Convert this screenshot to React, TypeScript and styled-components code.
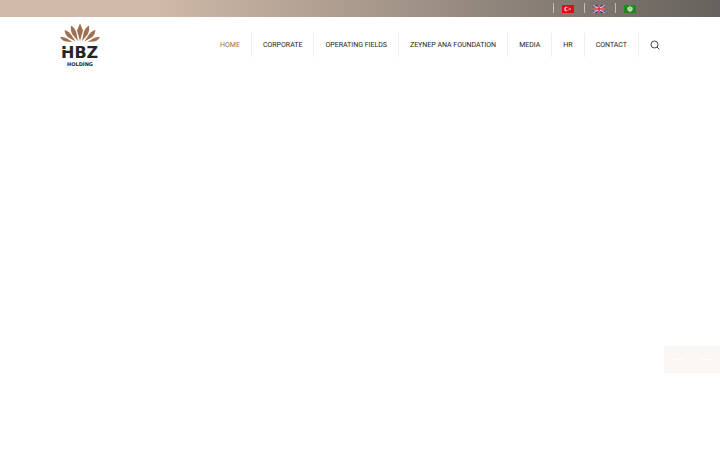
import React from "react";
import styled, { createGlobalStyle } from "styled-components";

const GlobalStyle = createGlobalStyle`
  * { box-sizing: border-box; }
  body { margin: 0; background: #fff; font-family: Roboto, "Liberation Sans", sans-serif; }
`;

const Page = styled.div`
  display: flex;
  flex-direction: column;
  min-height: 100vh;
`;

const TopBar = styled.div`
  display: flex;
  justify-content: flex-end;
  height: 17px;
  padding: 3px 84px 0 60px;
  background: linear-gradient(90deg, #cfb9a8 0%, #cfb9a8 22%, #66625d 100%);
`;

const Languages = styled.nav`
  display: flex;
  gap: 10px;
`;

const LanguageLink = styled.a`
  display: flex;
  height: 10px;
  padding: 2px 0 0 8px;
  border-left: 1px solid #c0bab4;
`;

const Flag = styled.svg`
  display: block;
  width: 12px;
  height: 8px;
`;

const Header = styled.header`
  display: flex;
  justify-content: space-between;
  align-items: center;
  height: 55px;
  padding: 0 60px;
`;

const LogoLink = styled.a`
  display: flex;
`;

const Menu = styled.nav`
  display: flex;
  align-items: center;
`;

const MenuLink = styled.a<{ $active?: boolean }>`
  padding: 0 11px;
  border-right: 1px solid #efefef;
  color: ${(p) => (p.$active ? "#a06a42" : "#222")};
  font-size: 7px;
  font-weight: 400;
  line-height: 24px;
  text-decoration: none;
  white-space: nowrap;
`;

const SearchButton = styled.button`
  display: flex;
  margin-left: 11px;
  padding: 0;
  border: 0;
  background: none;
`;

const Hero = styled.main`
  display: flex;
  flex: 1;
  justify-content: flex-end;
  align-items: flex-end;
  padding-bottom: 77px;
`;

const SliderControls = styled.div`
  display: flex;
  background: #fbf7f5;
`;

const SlideButton = styled.button`
  display: flex;
  align-items: center;
  justify-content: center;
  width: 28px;
  height: 27px;
  padding: 0;
  border: 0;
  background: none;
`;

const Logo = () => (
  <svg width="40" height="44" viewBox="0 0 40 44" role="img" aria-label="HBZ Holding">
    <g fill="#9f7050">
      <path d="M20 0.300L23 7.500L20 18L17 7.500Z" />
      {[1, -1].map((s) => (
        <g key={s} transform={`translate(20 0) scale(${s} 1)`}>
          <path d="M9 2.500C9.500 6 9 9 7.500 11.500L2 18.300L3.800 9C4.800 6 6.800 4 9 2.500Z" />
          <path d="M15.500 7C15 10 14.500 12 12 14.200L4.300 18.600L9 11.500C10.500 9 12.500 8 15.500 7Z" />
          <path d="M20 14C18.500 16.500 17 18.200 14 18.400L7.500 18.900L13 15.500C15.500 14 17.500 14 20 14Z" />
        </g>
      ))}
    </g>
    <text x="1" y="35" fill="#272425" fontFamily="DejaVu Sans, sans-serif" fontSize="16" fontWeight="700">HBZ</text>
    <path d="M1 26.500H6" stroke="#fff" strokeWidth="1" />
    <text x="20" y="43" textAnchor="middle" fill="#272425" fontFamily="DejaVu Sans, sans-serif" fontSize="5" fontWeight="700">HOLDİNG</text>
  </svg>
);

const TurkishFlag = () => (
  <Flag viewBox="0 0 12 8">
    <path fill="#e30a17" d="M0 0h12v8H0z" />
    <circle cx="4.500" cy="4" r="2.200" fill="#fff" />
    <circle cx="5.100" cy="4" r="1.700" fill="#e30a17" />
    <path fill="#fff" d="M8 2.800l.3.900h.9l-.7.500.3.900-.8-.6-.7.600.2-.9-.7-.5h.9z" />
  </Flag>
);

const BritishFlag = () => (
  <Flag viewBox="0 0 12 8">
    <path fill="#2b397f" d="M0 0h12v8H0z" />
    <path stroke="#f0e9ef" strokeWidth="1.300" d="M0 0l12 8M12 0L0 8" />
    <path stroke="#d22538" strokeWidth=".5" d="M0 0l12 8M12 0L0 8" />
    <path stroke="#fff" strokeWidth="2.400" d="M6 0v8M0 4h12" />
    <path stroke="#d22538" strokeWidth="1.500" d="M6 0v8M0 4h12" />
  </Flag>
);

const ArabicFlag = () => (
  <Flag viewBox="0 0 12 8">
    <path fill="#22881b" d="M0 0h12v8H0z" />
    <circle cx="6" cy="4" r="2.600" fill="#7fbd78" />
    <path stroke="#d4ead0" strokeWidth=".7" fill="none" d="M6 .7v6.500M3.500 2.500l1 3h3l1-3M4.700 2v3M7.300 2v3" />
  </Flag>
);

const languages = [
  { label: "Türkçe", Icon: TurkishFlag },
  { label: "English", Icon: BritishFlag },
  { label: "العربية", Icon: ArabicFlag },
];

const items = ["HOME", "CORPORATE", "OPERATING FIELDS", "ZEYNEP ANA FOUNDATION", "MEDIA", "HR", "CONTACT"];

const Arrow = ({ left }: { left?: boolean }) => (
  <svg width="12" height="9" viewBox="0 0 12 9" fill="none" stroke="#fff">
    <path d={left ? "M11 4.500H1M4 1.500L1 4.500l3 3" : "M1 4.500h10M8 1.500l3 3-3 3"} />
  </svg>
);

export default function App() {
  return (
    <Page>
      <GlobalStyle />
      <TopBar>
        <Languages aria-label="Languages">
          {languages.map(({ label, Icon }) => (
            <LanguageLink key={label} href="#" aria-label={label}>
              <Icon />
            </LanguageLink>
          ))}
        </Languages>
      </TopBar>
      <Header>
        <LogoLink href="#"><Logo /></LogoLink>
        <Menu aria-label="Main">
          {items.map((item, i) => (
            <MenuLink key={item} href="#" $active={i === 0}>{item}</MenuLink>
          ))}
          <SearchButton type="button" aria-label="Search">
            <svg width="10" height="10" viewBox="0 0 10 10" fill="none" stroke="#444">
              <circle cx="4.500" cy="4.500" r="3.500" />
              <path d="M7 7l2.300 2.300" />
            </svg>
          </SearchButton>
        </Menu>
      </Header>
      <Hero>
        <SliderControls>
          <SlideButton type="button" aria-label="Previous slide"><Arrow left /></SlideButton>
          <SlideButton type="button" aria-label="Next slide"><Arrow /></SlideButton>
        </SliderControls>
      </Hero>
    </Page>
  );
}
